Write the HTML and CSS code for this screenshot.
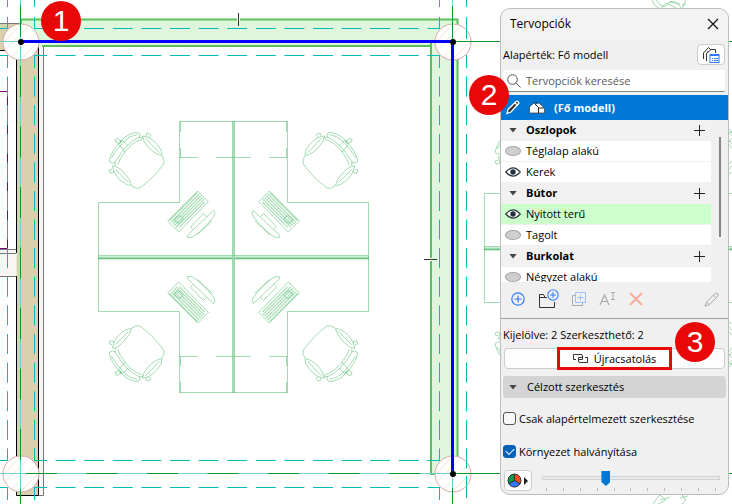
FILE: index.html
```html
<!DOCTYPE html>
<html lang="hu">
<head>
    <meta charset="UTF-8">
    <meta name="viewport" content="width=device-width, initial-scale=1.0">
    <title>Tervopciók</title>
    <link rel="stylesheet" href="styles.css">
</head>
<body>
    <!-- floor plan -->
    <svg class="plan" viewBox="0 0 732 504" preserveAspectRatio="xMinYMin slice" aria-hidden="true">
        <defs>
            <!-- one quarter of the desk group: desk outline, chair, keyboard, monitor -->
            <g id="quarter">
                <path d="M233 121.500H179.500V202.500H98.500V257M98.500 255.500H233M180 157.500H198M216 157.500H233"/>
                <path d="M180.500 121V132M180.500 148V158"/>
                <g transform="translate(90 110) scale(.33333)" stroke-width="3">
                    <path d="M58 150Q64 124 95 90Q120 66 146 68Q153 74 148 82Q112 95 75 156Q68 163 59 155Z"/>
                    <path d="M64 144Q78 118 104 92Q122 76 142 74M87 104L105 126M98 92L114 108"/>
                    <path d="M76 88l7-3 4 5 6 2-2 7-5 3-5-6-6-1zM90 98l8-6"/>
                    <path d="M148 82L160 84M75 156L76 166M105 126Q128 95 156 88M84 164Q88 146 105 126"/>
                    <path d="M157 78Q180 78 203 105Q218 122 216 136Q196 134 176 113Q160 96 157 78Z"/>
                    <path d="M166 84L208 128M168 78l2-8 8 0 5 5-6 7"/>
                    <path d="M67 168Q78 164 100 186Q121 207 125 226Q108 228 86 206Q70 190 67 168Z"/>
                    <path d="M76 178L116 218M66 178l-8 2 2 9 8 0 4-6"/>
                    <path d="M216 138Q226 150 221 162Q190 205 150 234Q140 238 126 228"/>
                    <path d="M323 243L355 275L266 366L233 333Z"/>
                    <path d="M322 248L238 332M327 253L243 337M332 258L248 342M337 263L253 347M342 268L258 352M344 276L268 352" stroke-dasharray="6 1" stroke-width="4"/>
                    <path d="M252 330l16-14 12 10-14 14z"/>
                    <path d="M371 301L375 309L371 320Q352 345 328 366Q318 376 303 383L293 382L292 376ZM302 350L340 311L350 320M302 350L308 358M366 333L322 374"/>
                </g>
            </g>
            <g id="desks" class="desk">
                <use href="#quarter"/>
                <use href="#quarter" transform="translate(467) scale(-1 1)"/>
                <use href="#quarter" transform="translate(0 514) scale(1 -1)"/>
                <use href="#quarter" transform="translate(467 514) scale(-1 -1)"/>
                <path d="M98 258H369M233.500 121V393" stroke-width="3"/>
            </g>
            <g id="column">
                <circle r="18"/>
                <path d="M-15 7L7-15M-9 15L15-9M0 17L17 0M-17 0L-1-17"/>
            </g>
        </defs>

        <use href="#desks"/>
        <use href="#desks" transform="translate(386 -9)"/>
        <path class="chair-part" d="M652 0Q655 9 663 9M656 0Q664 12 669 2Q676 -1 682 9L686 0M660 9L666 3L678 9M670 2L680 4M682 5L686 4"/>
        <path class="chair-part" d="M653 504Q656 499 660 495L666 500L658 504M660 500L670 497M682 495L686 500L682 504M680 498L688 496"/>

        <!-- left wall -->
        <path class="tan" d="M0 24H16V50H0ZM16.500 30H38.500V495.500H16.500Z"/>
        <path class="plaster" d="M39 46H43V495H39ZM0 249H16V277H0Z"/>
        <path class="gray" d="M43.500 46V495.500H39M0 23.500H21M0 249.500H16M0 253.500H16M0 276.500H16"/>
        <path class="black" d="M0 50.500H8M16.500 58V253M16.500 276V495.500H38.500V42"/>
        <path class="purple" d="M0 91.500H7.500V248.500H0"/>

        <!-- green walls -->
        <path class="green-fill" d="M21 19H457V474H430V46H21Z"/>
        <path class="green-edge" d="M21 25V19.500H457.500V26M42 46H430M457.500 57V458M431 42V474H436"/>
        <path class="notch" d="M237 19.500H240M430.500 258V261"/>
        <path class="tick" d="M238.500 13V26M424 259.500H437"/>

        <g class="column">
            <use href="#column" x="21" y="42"/>
            <use href="#column" x="453" y="42"/>
            <use href="#column" x="21" y="474"/>
            <use href="#column" x="453" y="474"/>
        </g>

        <!-- grid axes -->
        <path class="axis-soft" d="M20.500 0V504M0 41.500H21M0 473.500H453M452.500 0V504"/>
        <path class="axis" d="M20.500 5.500V504M26 473.500H453" stroke-dasharray="31 29.500"/>
        <path class="axis" d="M452.500 6V42M452.500 488V504M453 41.500H732M453 473.500H732"/>

        <path class="offset" d="M34 28.500H439.500M34 55.500H439.500M34 460.500H439.500M34 487.500H439.500" stroke-dashoffset="7"/>
        <path class="offset" d="M7.500 55V461M34.500 55V461M439.500 55V461M466.500 55V470" stroke-dashoffset="7"/>
        <path class="offset-end" d="M7.500 0V7M7.500 17V28.500H0M34.500 0V7M34.500 17V29M439.500 0V7M439.500 17V29M466.500 0V7M466.500 17V39M0 55.500H8M0 460.500H8M0 487.500H7.500V500M34.500 487V500M439.500 487V500M466.500 476V498"/>

        <path class="selected" d="M21 41.500H452.500V474"/>
        <circle cx="21" cy="42" r="3"/>
        <circle cx="453" cy="42" r="3"/>
        <circle cx="453" cy="474" r="3"/>
    </svg>
    <span class="badge badge-1">1</span>

    <!-- palette -->
    <section class="panel">
        <header class="panel-title">
            <h1>Tervopciók</h1>
            <button class="icon-btn" aria-label="Bezárás">
                <svg width="12" height="12" viewBox="0 0 12 12"><path d="M1 1L11 11M11 1L1 11" stroke="#111" stroke-width="1.200"/></svg>
            </button>
        </header>

        <div class="default-row">
            <span>Alapérték: Fő modell</span>
            <button class="box-btn" aria-label="Beállítások">
                <svg width="20" height="18" viewBox="0 0 20 18" fill="none">
                    <path d="M2.500 13V7L7.500 1.500L10 4M5.500 15V7.500L10 3.500L14.500 3.500V7M5.500 7.500L7.500 5" stroke="#333"/>
                    <rect x="9" y="8.500" width="9" height="8" fill="#fff" stroke="#2f7bff"/>
                    <path d="M9 9.500H18M11 12.500H12M13 12.500H17M11 14.500H12M13 14.500H17" stroke="#2f7bff"/>
                </svg>
            </button>
        </div>

        <label class="search">
            <svg width="14" height="14" viewBox="0 0 14 14" fill="none" stroke="#555"><circle cx="5.500" cy="5.500" r="4.800"/><path d="M9 9L13.500 13.500"/></svg>
            <input type="text" placeholder="Tervopciók keresése" aria-label="Tervopciók keresése">
        </label>

        <div class="main-model">
            <svg width="14" height="15" viewBox="0 0 14 15" fill="#333" stroke="#fff" stroke-width="1.300"><path d="M1 13.500L2 9.500L10 1.500Q12 .5 13 3L5 12Z"/><path d="M9 3L12 5.500"/></svg>
            <svg width="16" height="12" viewBox="0 0 16 12"><path d="M.5 11V5L5 1L7 2.500L10 1L15.500 6V11Z" fill="#fff"/><path d="M5.500 1.500L9.500 5.500V11M9.500 6L15 6" fill="none" stroke="#222"/><path d="M.5 11V5L5 .7L10 1L15.500 6V11Z" fill="none" stroke="#333" stroke-width=".7"/></svg>
            <b>(Fő modell)</b>
        </div>

        <div class="options">
            <ul class="list">
                <li class="group"><i class="arrow"></i><span>Oszlopok</span><button class="add" aria-label="Új Oszlopok opció"></button></li>
                <li><button class="eye off" aria-label="Megjelenítés"></button><span>Téglalap alakú</span></li>
                <li><button class="eye" aria-label="Elrejtés"><svg width="16" height="10" viewBox="0 0 16 10"><path d="M.8 5Q8-3.200 15.200 5Q8 13.200 .8 5Z" fill="#fff" stroke="#26323a" stroke-width="1.200"/><circle cx="8" cy="5" r="2.700" fill="#26323a"/></svg></button><span>Kerek</span></li>
                <li class="group"><i class="arrow"></i><span>Bútor</span><button class="add" aria-label="Új Bútor opció"></button></li>
                <li class="active"><button class="eye" aria-label="Elrejtés"><svg width="16" height="10" viewBox="0 0 16 10"><path d="M.8 5Q8-3.200 15.200 5Q8 13.200 .8 5Z" fill="#fff" stroke="#26323a" stroke-width="1.200"/><circle cx="8" cy="5" r="2.700" fill="#26323a"/></svg></button><span>Nyitott terű</span></li>
                <li><button class="eye off" aria-label="Megjelenítés"></button><span>Tagolt</span></li>
                <li class="group"><i class="arrow"></i><span>Burkolat</span><button class="add" aria-label="Új Burkolat opció"></button></li>
                <li><button class="eye off" aria-label="Megjelenítés"></button><span>Négyzet alakú</span></li>
            </ul>
            <div class="scroll"><div class="scroll-thumb"></div></div>
        </div>

        <div class="tools">
            <button class="icon-btn" aria-label="Új opció"><svg width="14" height="14" viewBox="0 0 14 14" fill="none" stroke="#2f7bff" stroke-width="1.200"><circle cx="7" cy="7" r="6.200"/><path d="M7 3.500V10.500M3.500 7H10.500"/></svg></button>
            <button class="icon-btn" aria-label="Új csoport"><svg width="21" height="20" viewBox="0 0 21 20" fill="none"><path d="M9 8.500H7L5.500 5.500H1.500V18.500H16.500V13M1.500 8.500H7" stroke="#333"/><circle cx="15" cy="6" r="5.200" stroke="#2f7bff" stroke-width="1.100"/><path d="M15 3V9M12 6H18" stroke="#2f7bff"/></svg></button>
            <button class="icon-btn" aria-label="Másolás" disabled><svg width="14" height="14" viewBox="0 0 14 14" fill="none"><path d="M3 3.500H.5V13.500H10.500V11" stroke="#aaa"/><path d="M3.500 .5H13.500V10.500H3.500ZM8.500 2.500V8.500M5.500 5.500H11.500" stroke="#9dc0fa"/></svg></button>
            <button class="icon-btn" aria-label="Átnevezés" disabled><svg width="17" height="14" viewBox="0 0 17 14" fill="none" stroke="#aaa"><path d="M1 13L5.500 3L10 13M2.500 9.500H8.500" stroke-width="1.200"/><path d="M12 .5H16M14 .5V7.500M12 7.500H16"/></svg></button>
            <button class="icon-btn" aria-label="Törlés" disabled><svg width="14" height="14" viewBox="0 0 14 14"><path d="M1 1L13 13M13 1L1 13" stroke="#f9ac9c" stroke-width="2"/></svg></button>
            <button class="icon-btn edit" aria-label="Szerkesztés" disabled><svg width="15" height="15" viewBox="0 0 15 15" fill="none" stroke="#aaa"><path d="M.8 14.200L2.500 10L11 1.500Q12.500 .5 13.800 1.800Q14.800 3 13.500 4.500L5 12.800ZM9.500 3L12 5.500M2.500 10L5 12.500"/></svg></button>
        </div>

        <div class="edit-area">
            <p>Kijelölve: 2 Szerkeszthető: 2</p>
            <button class="relink">
                <span class="mark">
                    <svg width="15" height="9" viewBox="0 0 15 9" fill="none" stroke="#333"><path d="M3 5.500H.5V.5H8Q9.500 .5 9.500 2V5.500H5"/><path d="M12 3.500H14.500V8.500H7Q5.500 8.500 5.500 7V3.500H10"/></svg>
                    Újracsatolás
                </span>
            </button>
            <button class="section"><i class="arrow"></i>Célzott szerkesztés</button>
            <label class="check"><input type="checkbox">Csak alapértelmezett szerkesztése</label>
            <label class="check"><input type="checkbox" checked>Környezet halványítása</label>
            <div class="fade-row">
                <button class="box-btn" aria-label="Szín">
                    <svg width="22" height="15" viewBox="0 0 22 15"><g stroke="#333"><path d="M7.500 7.500V1A6.500 6.500 0 0 1 13.100 10.800Z" fill="#ff4a1c"/><path d="M7.500 7.500L13.100 10.800A6.500 6.500 0 0 1 1.900 10.800Z" fill="#3478ff"/><path d="M7.500 7.500L1.900 10.800A6.500 6.500 0 0 1 7.500 1Z" fill="#0b9c4a"/></g><path d="M17 4L21 8L17 12Z" fill="#222"/></svg>
                </button>
                <div class="slider">
                    <input type="range" min="0" max="100" value="35" aria-label="Környezet halványítása">
                    <div class="marks"><i></i><i></i><i></i><i></i><i></i><i></i><i></i><i></i><i></i><i></i><i></i></div>
                </div>
            </div>
        </div>
        <span class="badge badge-2">2</span>
        <span class="badge badge-3">3</span>
    </section>
</body>
</html>
```
FILE: styles.css
```css
*{
    margin:0;
    padding:0;
    box-sizing:border-box;
}
body{
    min-height:100vh;
    position:relative;
    overflow:hidden;
    background:#fff;
    color:#000;
    font:11px/20px "Open Sans","Noto Sans",sans-serif;
}
button,input{
    font:inherit;
    color:inherit;
}
button{
    border:0;
    background:none;
}
svg{
    display:block;
    flex:none;
}

/* floor plan */
.plan{
    width:100%;
    height:100vh;
}
.plan path{
    fill:none;
}
.desk,.chair-part{
    fill:none;
    stroke:#16a53f;
    stroke-opacity:.4;
}
.plan .tan{
    fill:#d9d0ae;
}
.plan .plaster{
    fill:#f8f6f2;
}
.gray{
    stroke:#777;
}
.black{
    stroke:#000;
}
.purple{
    stroke:#800080;
}
.plan .green-fill{
    fill:#e0f6dc;
}
.green-edge{
    stroke:#5cbf5c;
    stroke-width:2;
}
.notch{
    stroke:#fff;
    stroke-width:3;
}
.tick{
    stroke:#333;
}
.column{
    fill:#fff;
    stroke:#dba6a6;
}
.column path,#column path{
    stroke:#fbe3d6;
}
.axis-soft{
    stroke:#74cfc2;
}
.axis{
    stroke:#0a9a2a;
}
.offset,.offset-end{
    stroke:#00bdb5;
}
.offset{
    stroke-dasharray:20 8.6;
}
.selected{
    stroke:#0000ff;
    stroke-width:3;
}

/* numbered markers */
.badge{
    position:absolute;
    width:40px;
    height:40px;
    border-radius:50%;
    background:#e90808;
    color:#fff;
    font:30px/40px "Liberation Sans",Arial,sans-serif;
    text-align:center;
}
.badge-1{
    left:41px;
    top:1px;
}
.badge-2{
    left:-32px;
    top:66px;
}
.badge-3{
    right:13px;
    top:313px;
}

/* palette */
.panel{
    position:absolute;
    right:3px;
    top:8px;
    width:229px;
    border:1px solid #bdbdbd;
    border-radius:10px;
    background:#f0f0f0;
}
.panel-title{
    display:flex;
    align-items:center;
    justify-content:space-between;
    height:30px;
    padding:0 9px;
    border-radius:10px 10px 0 0;
    background:#f3f3f3;
}
.panel-title h1{
    font-size:12px;
    font-weight:normal;
}
.icon-btn{
    display:flex;
    align-items:center;
}
.default-row{
    display:flex;
    align-items:center;
    justify-content:space-between;
    height:31px;
    padding:0 3px 0 2px;
}
.box-btn{
    display:flex;
    align-items:center;
    justify-content:center;
    width:28px;
    height:21px;
    border:1px solid #ccc;
    border-radius:4px;
    background:#fdfdfd;
}
.search{
    display:flex;
    align-items:center;
    gap:5px;
    height:22px;
    margin:0 3px 3px 2px;
    padding:0 4px;
    border-bottom:1px solid #868686;
    border-radius:2px;
    background:#fff;
}
.search input{
    flex:1;
    min-width:0;
    border:0;
    outline:0;
    background:none;
}
.search input::placeholder{
    color:#5a5a5a;
}
.main-model{
    display:flex;
    align-items:center;
    gap:9px;
    height:25px;
    padding-left:5px;
    background:#0078d7;
    color:#fff;
}
.options{
    display:flex;
    height:162px;
    overflow:hidden;
}
.list{
    flex:1;
    list-style:none;
}
.list li{
    display:flex;
    align-items:center;
    height:21px;
    padding:0 6px 0 4px;
    border-bottom:1px solid #f0f0f0;
    background:#fff;
}
.list .group{
    background:#f1f1f1;
    font-weight:bold;
}
.list .active{
    background:#ccffcc;
}
.list span{
    flex:1;
    padding-left:5px;
}
.arrow{
    flex:none;
    width:16px;
    height:5px;
    background:#444;
    clip-path:polygon(4px 0,12px 0,8px 5px);
}
.add{
    width:11px;
    height:11px;
    background:linear-gradient(#222,#222) center/11px 1px no-repeat,linear-gradient(#222,#222) center/1px 11px no-repeat;
}
.eye{
    width:16px;
    height:10px;
}
.off{
    border:1px solid #a5a5a5;
    border-radius:50%;
    background:#cfcfcf;
}
.scroll{
    width:17px;
    padding:17px 7px 0 8px;
}
.scroll-thumb{
    height:100px;
    background:#858585;
}
.tools{
    display:flex;
    align-items:center;
    gap:13px;
    height:37px;
    padding:0 9px 2px 10px;
    border-bottom:1px solid #a0a0a0;
}
.edit{
    margin-left:auto;
}
.edit-area{
    padding:6px 2px 3px;
}
.relink{
    display:flex;
    align-items:center;
    justify-content:center;
    min-width:calc(100% - 2px);
    height:21px;
    margin:3px 1px 7px;
    border:1px solid #ccc;
    border-radius:4px;
    background:#fdfdfd;
}
.mark{
    display:flex;
    align-items:center;
    gap:6px;
    height:23px;
    padding:0 13px;
    border:3px solid #e90808;
}
.section{
    display:flex;
    align-items:center;
    gap:6px;
    width:100%;
    height:22px;
    padding-left:2px;
    border-radius:3px;
    background:#d4d4d4;
}
.check{
    display:flex;
    align-items:center;
    gap:3px;
    height:33px;
}
.section + .check{
    margin-top:4px;
}
.check input{
    appearance:none;
    width:13px;
    height:13px;
    border:1px solid #555;
    border-radius:3px;
    background:#f8f8f8;
}
.check input:checked{
    border-color:#0560b6;
    background:#0560b6;
}
.check input:checked::after{
    content:"";
    display:block;
    width:7px;
    height:4px;
    margin:2px;
    border:solid #fff;
    border-width:0 0 1px 1px;
    transform:rotate(-45deg);
}
.fade-row{
    display:flex;
    align-items:center;
    gap:10px;
    margin-top:2px;
    padding:0 6px 0 1px;
}
.slider{
    flex:1;
}
.slider input{
    appearance:none;
    display:block;
    width:100%;
    height:16px;
    background:none;
}
.slider input::-webkit-slider-runnable-track{
    height:4px;
    border:1px solid #d2d2d2;
    background:#e7eaea;
}
.slider input::-webkit-slider-thumb{
    appearance:none;
    width:9px;
    height:15px;
    margin-top:-6px;
    background:#0078d7;
    clip-path:polygon(0 0,100% 0,100% 11px,50% 100%,0 11px);
}
.marks{
    display:flex;
    justify-content:space-between;
    padding:2px 4px 0;
}
.marks i{
    width:1px;
    height:3px;
    background:#bbb;
}
```
